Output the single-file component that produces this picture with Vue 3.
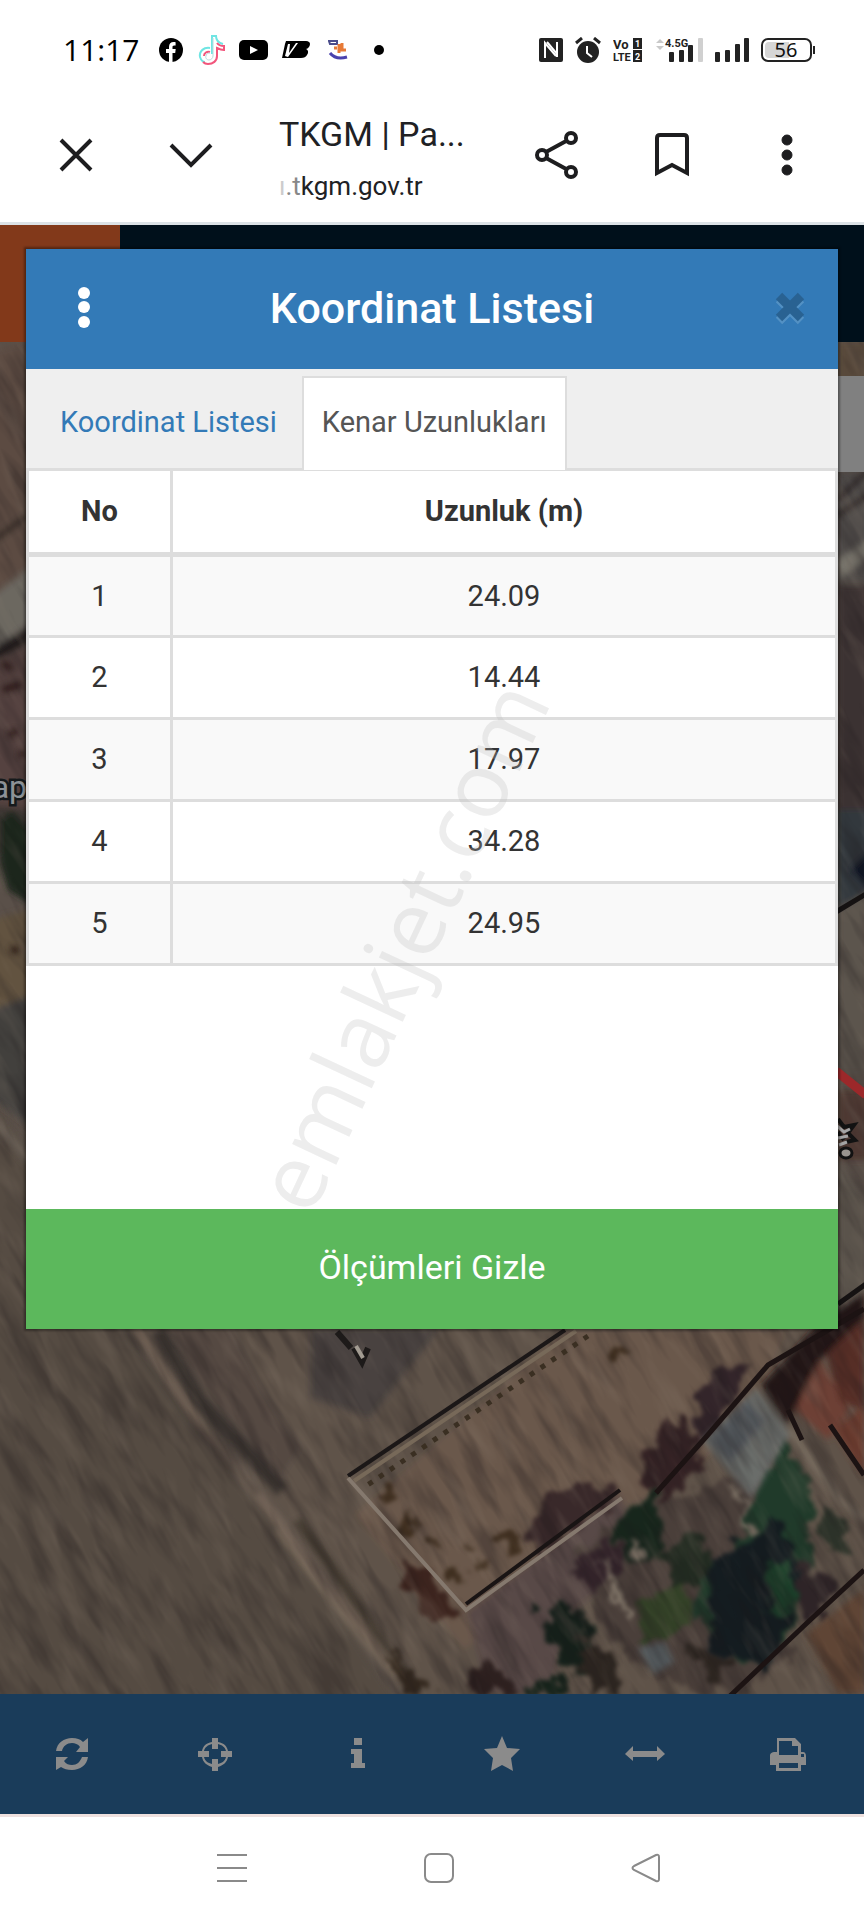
<template>
  <div class="screen">
    <header class="status-bar">
      <div class="status-left">
        <span class="clock">11:17</span>
        <svg width="24" height="24" viewBox="0 0 24 24">
          <circle cx="12" cy="12" r="12" fill="#000" />
          <path d="M10 24V15H7v-4h3V9c0-3.400 1.800-5 4.600-5 1 0 2 .2 2 .2v3.200h-1.400c-1.400 0-1.700.8-1.700 1.800V11h3.200l-.5 4h-2.700v9z" fill="#fff" />
        </svg>
        <svg width="28" height="30" viewBox="0 0 28 30" fill="none" stroke-width="2">
          <path d="M13 13c-6-1-11 3-10 9 1 3 3 5 5 5M15 19V1h4c0 5 3 7 7 8" stroke="#6fe5e3" />
          <path d="M20 8c2 3 4 3 7 3v4c-3 0-5-1-7-2v8c0 5-4 8-9 8-2 0-4-1-5-2M13 17c-3-1-6 1-6 4" stroke="#f2557c" />
          <path d="M16 3v18c0 2-2 4-4 4s-4-2-3-4c0-2 2-3 4-3" stroke="#b9d9dd" stroke-width="1" />
        </svg>
        <svg width="29" height="20" viewBox="0 0 29 20">
          <rect width="29" height="20" rx="5" fill="#000" />
          <path d="M11 6l8 4-8 4z" fill="#fff" />
        </svg>
        <svg width="28" height="18" viewBox="0 0 28 18">
          <path d="M4 0h20c4 0 5 3 3 6-1 1-2 2-3 2 2 1 3 3 1 6-1 2-3 3-6 3H0L3 3z" fill="#000" />
          <path d="M3 15L6 3h2L7 12 14 2h2L6 16" fill="#fff" />
        </svg>
        <svg class="face" width="20" height="20" viewBox="0 0 20 20" fill="none">
          <path d="M1 1h8v3H2z" stroke="#4b4d8c" stroke-width="2" />
          <path d="M11 4v9M6 8h3M14 3v6M10 10h8" stroke="#e77a37" stroke-width="3" />
          <path d="M2 13c4 5 10 6 17 4" stroke="#4a42ae" stroke-width="3" />
        </svg>
        <svg class="more-dot" width="10" height="10" viewBox="0 0 10 10"><circle cx="5" cy="5" r="5" /></svg>
      </div>
      <div class="status-right">
        <svg width="24" height="24" viewBox="0 0 24 24">
          <rect width="24" height="24" rx="2" fill="#222" />
          <path d="M6 20V5l11 13" fill="none" stroke="#fff" stroke-width="2" />
          <path d="M18 4v15M8 4l10 12" fill="none" stroke="#fff" stroke-width="2" />
        </svg>
        <svg width="26" height="26" viewBox="0 0 26 26">
          <circle cx="13" cy="15" r="11" fill="#222" />
          <path d="M1 6l6-5M19 1l6 5" stroke="#222" stroke-width="3" />
          <path d="M12 9v7l5 4" stroke="#fff" stroke-width="2" fill="none" />
        </svg>
        <svg width="30" height="26" viewBox="0 0 30 26">
          <text class="vo" x="0" y="12">Vo</text>
          <text class="lte" x="0" y="24">LTE</text>
          <rect x="20" y="1" width="9" height="11" fill="#222" />
          <rect x="20" y="13" width="9" height="12" fill="#222" />
          <text class="sim" x="22" y="10">1</text>
          <text class="sim" x="22" y="23">2</text>
        </svg>
        <svg width="48" height="26" viewBox="0 0 48 26">
          <path d="M1 6l4-4 4 4zM1 9h8l-4 4z" fill="#c9c9c9" />
          <text class="band" x="10" y="10">4.5G</text>
          <rect x="14" y="15" width="5" height="10" rx="1" fill="#222" />
          <rect x="24" y="13" width="5" height="12" rx="1" fill="#222" />
          <rect x="33" y="8" width="5" height="17" rx="1" fill="#222" />
          <rect x="43" y="1" width="5" height="24" rx="1" fill="#d0d0d0" />
        </svg>
        <svg width="34" height="24" viewBox="0 0 34 24" fill="#222">
          <rect y="14" width="5" height="10" rx="1" />
          <rect x="10" y="12" width="5" height="12" rx="1" />
          <rect x="20" y="6" width="5" height="18" rx="1" />
          <rect x="29" width="5" height="24" rx="1" />
        </svg>
        <svg width="54" height="26" viewBox="0 0 54 26">
          <rect x="1" y="2" width="49" height="22" rx="6" fill="#fff" stroke="#222" stroke-width="2" />
          <path d="M8 5h20v16H8a4 4 0 0 1-4-4V9a4 4 0 0 1 4-4z" fill="#d6d6d6" />
          <path d="M53 9v8" stroke="#222" stroke-width="2" />
          <text class="battery" x="25" y="20" text-anchor="middle">56</text>
        </svg>
      </div>
    </header>

    <div class="browser-bar">
      <button class="icon-btn" aria-label="Kapat">
        <svg width="34" height="34" viewBox="0 0 34 34"><path d="M2 2l30 30M32 2L2 32" /></svg>
      </button>
      <button class="icon-btn" aria-label="Küçült">
        <svg width="44" height="34" viewBox="0 0 44 34"><path d="M2 7l20 20L42 7" /></svg>
      </button>
      <div class="page-info">
        <div class="page-title">TKGM | Pa...</div>
        <div class="page-url"><span class="fade-1">ı</span><span class="fade-2">.t</span>kgm.gov.tr</div>
      </div>
      <button class="icon-btn" aria-label="Paylaş">
        <svg width="46" height="50" viewBox="0 0 46 50">
          <path d="M12 22L34 10M12 28l22 12" />
          <circle cx="8" cy="25" r="5" /><circle cx="37" cy="8" r="5" /><circle cx="37" cy="42" r="5" />
        </svg>
      </button>
      <button class="icon-btn" aria-label="Yer işareti">
        <svg width="36" height="46" viewBox="0 0 36 46"><path d="M3 41V6q0-3 3-3h24q3 0 3 3v35l-15-8z" /></svg>
      </button>
      <button class="icon-btn" aria-label="Diğer">
        <svg width="12" height="42" viewBox="0 0 12 42" class="dots"><circle cx="6" cy="6" r="5" /><circle cx="6" cy="21" r="5" /><circle cx="6" cy="36" r="5" /></svg>
      </button>
    </div>

    <main class="app">
      <div class="app-header"><div class="app-brand"></div></div>

      <div class="map">
        <svg class="map-image" viewBox="0 342 864 1352" preserveAspectRatio="xMidYMid slice">
          <defs>
            <filter id="soft" x="-10%" y="-10%" width="120%" height="120%"><feGaussianBlur stdDeviation="3" /></filter>
            <filter id="rough" x="-10%" y="-10%" width="120%" height="120%" color-interpolation-filters="sRGB">
              <feTurbulence type="fractalNoise" baseFrequency="0.05" numOctaves="3" seed="4" />
              <feDisplacementMap in="SourceGraphic" scale="34" xChannelSelector="R" yChannelSelector="G" />
              <feGaussianBlur stdDeviation="2" />
            </filter>
            <filter id="grain" x="0" y="0" width="100%" height="100%" color-interpolation-filters="sRGB">
              <feTurbulence type="fractalNoise" baseFrequency="0.012 0.06" numOctaves="3" seed="9" />
              <feColorMatrix values="0 0 0 0 0.1  0 0 0 0 0.08  0 0 0 0 0.09  3 0 0 0 -1.300" />
            </filter>
            <filter id="light" x="0" y="0" width="100%" height="100%" color-interpolation-filters="sRGB">
              <feTurbulence type="fractalNoise" baseFrequency="0.015 0.06" numOctaves="3" seed="21" />
              <feColorMatrix values="0 0 0 0 0.6  0 0 0 0 0.54  0 0 0 0 0.48  3 0 0 0 -1.500" />
            </filter>
          </defs>
          <rect y="342" width="864" height="1352" fill="#5a5049" />
          <g filter="url(#soft)">
            <path d="M120 1300L420 1700H900V1200H120z" fill="#5e534a" />
            <path d="M-20 1080l430 640H-20z" fill="#544b43" />
            <path d="M160 1328h70l30 60 40 60-20 30-60-70z" fill="#544a43" />
            <path d="M310 1328h130l-70 90-60-20z" fill="#484240" />
            <path d="M565 1330h220l-20 60-60 70-60 40-60 20-40 50-60 60-20 20-110-135z" fill="#6a594b" />
            <path d="M466 1612l154-118 20 60-70 60-20 80h-60z" fill="#594a46" />
            <path d="M132 1320l70 110 60 70 60 80 100 120" stroke="#6f6154" stroke-width="9" fill="none" />
            <path d="M158 1330l42 70 50 55 32 36" stroke="#37312f" stroke-width="15" fill="none" />
            <path d="M298 1520l50 70 70 104" stroke="#40382f" stroke-width="10" fill="none" />
            <path d="M276 1530l60 76 72 90" stroke="#7c6d5d" stroke-width="4" fill="none" />
            <path d="M126 1330l66 94 66 70" stroke="#3d3630" stroke-width="4" fill="none" />
          </g>
          <g filter="url(#rough)">
            <path d="M402 1565q12-8 20 5l32 40q-6 16-24 8-18-24-28-53z" fill="#3c241e" />
            <path d="M468 1670q30-12 56 24h-54z" fill="#2d201f" />
            <path d="M392 1655q20 4 40 40h-28z" fill="#34291f" />
            <path d="M525 1535q20-60 75-50l20 10-80 60z" fill="#39292a" />
            <path d="M638 1475q20-60 50-55 20 20 10 50l-34 34z" fill="#352325" />
            <path d="M692 1410q14-46 58-44l-46 86z" fill="#33252a" />
            <path d="M575 1550l50-30 40-20 90-30 30 60 10 120-60 50-80-20-60-60z" fill="#4a3f3a" />
            <path d="M618 1520l36-26 12 34-14 40-30-10z" fill="#17261c" />
            <path d="M572 1560l42-24 14 30-40 36z" fill="#33242a" />
            <path d="M542 1612q22-24 42 5l8 60-34-8z" fill="#15201a" />
            <path d="M750 1500l34-70 20 50 6 70-20 90-50 30-46-60 0-40 40-14z" fill="#203a2a" />
            <path d="M710 1560l70-40 24 60-34 90-56-20z" fill="#141c20" />
            <path d="M764 1570l26-8 8 40-24 20z" fill="#1c402a" />
            <path d="M638 1600l46-14 14 36-54 24z" fill="#334127" />
            <path d="M654 1550l46-14 12 40-40 18z" fill="#222b21" />
            <path d="M798 1560l36 20-18 46-20-24z" fill="#2e2427" />
            <path d="M534 1680l30-4 6 18h-36z" fill="#15221a" />
            <path d="M576 1640l30 10 20 44h-34zM690 1640l40 20-14 30z" fill="#2c2520" />
            <path d="M820 1500l20 10 10 40-24 4z" fill="#2c3229" />
            <path d="M600 1560l30 60M632 1540l10 20M736 1490l14 40" stroke="#7b7064" stroke-width="6" />
          </g>
          <g filter="url(#soft)">
            <path d="M756 1388l34 46-38 64-50-58z" fill="#6a6d6b" />
            <path d="M746 1400l20 20-36 42-20-22z" fill="#575c60" />
            <path d="M782 1398l38-38 30 50-22 30z" fill="#6d4034" />
            <path d="M826 1350l38-30v90l-24-8z" fill="#572e28" />
            <path d="M834 1430l30-25v72z" fill="#6b3b2d" />
            <path d="M762 1385l50-55 52-42v30l-44 42-34 66z" fill="#241416" />
            <path d="M806 1634l58-45v104h-26z" fill="#5f4536" />
            <path d="M638 1648l26-6 10 20-20 12z" fill="#565d60" />
            <path d="M790 1430l50 70 24 20" stroke="#786d60" stroke-width="6" fill="none" />
          </g>
          <g fill="#3f2f20" filter="url(#rough)">
            <ellipse cx="386" cy="1494" rx="8" ry="9" /><ellipse cx="410" cy="1525" rx="8" ry="9" />
            <ellipse cx="432" cy="1546" rx="6" ry="7" /><ellipse cx="455" cy="1577" rx="7" ry="8" />
            <ellipse cx="483" cy="1565" rx="8" ry="6" /><ellipse cx="508" cy="1540" rx="10" ry="11" />
            <ellipse cx="470" cy="1548" rx="4" ry="6" /><ellipse cx="622" cy="1349" rx="7" ry="7" />
          </g>

          <!-- strip left of the dialog -->
          <g filter="url(#soft)">
            <path d="M-10 350l40-10v240l-40 30z" fill="#5c4c43" />
            <path d="M-10 598l40-30v55l-40 32z" fill="#6c6761" />
            <path d="M-10 650l40-25v18l-40 20z" fill="#211a1a" />
            <path d="M-10 665l40-20v170l-40-10z" fill="#54433f" />
            <path d="M-10 805l40 5v60l-40-20z" fill="#3a3631" />
            <path d="M0 820l12-10 18 20v74l-22-14-8-28z" fill="#1c251f" />
            <path d="M-10 920l40-10v85l-40 15z" fill="#625341" />
            <path d="M-10 1010l40-14v130l-40-30z" fill="#42403e" />
            <path d="M2 662l10 8M2 690l20-6M8 735l10-4M22 750v8M10 950h10" stroke="#2b1919" stroke-width="8" />
            <path d="M-6 1120l60 70" stroke="#6c6259" stroke-width="8" />
            <path d="M-6 540l36-26" stroke="#2a211e" stroke-width="5" />
          </g>

          <!-- strip right of the dialog -->
          <g filter="url(#soft)">
            <path d="M838 342h30v60h-30z" fill="#584a3b" />
            <path d="M838 472h30v110h-30z" fill="#4f4b49" />
            <path d="M838 500l30-30M838 515l30-20" stroke="#292423" stroke-width="6" />
            <path d="M838 560l30-20v18l-30 22z" fill="#77736b" />
            <path d="M838 585h30v230h-30z" fill="#3b3230" />
            <path d="M838 810h30v80l-30 20z" fill="#30383e" />
            <path d="M850 870l20-20v40z" fill="#0f1726" />
            <path d="M838 908l30-14v180h-30z" fill="#5c544d" />
            <path d="M838 1090h30v70h-30z" fill="#4d3833" />
            <path d="M838 1160l30 40v90l-30 20z" fill="#5a524b" />
          </g>
          <rect x="-500" y="-300" width="2000" height="2600" filter="url(#grain)" opacity=".28" transform="rotate(60 432 1000)" />
          <rect x="-500" y="-300" width="2000" height="2600" filter="url(#light)" opacity=".16" transform="rotate(60 432 1000)" />

          <!-- parcel walls -->
          <path d="M565 1330L348 1476" stroke="#1b1717" stroke-width="4" />
          <path d="M576 1331L354 1481" stroke="#776959" stroke-width="4" />
          <path d="M588 1336L366 1486" stroke="#3a2f22" stroke-width="5" stroke-dasharray="5 8" />
          <path d="M348 1478l118 132 156-112" fill="none" stroke="#85796e" stroke-width="4" />
          <path d="M466 1604l154-114" stroke="#191414" stroke-width="4" />
          <path d="M656 1493l50-56 62-72 96-56M730 1696l78-74 56-52M788 1410l14 30M830 1425l34 50" fill="none" stroke="#1c1313" stroke-width="5" />
          <path d="M337 1332l14 16M354 1348l8 14 6-14" stroke="#1d1a19" stroke-width="6" fill="none" />
          <path d="M356 1346l7 12" stroke="#a39c92" stroke-width="4" />

          <text class="place" x="27" y="798" text-anchor="end">ap</text>
          <path d="M836 912l30-18M838 1304l28-20" stroke="#151212" stroke-width="5" />
          <path d="M836 1071l30 24" stroke="#9c282a" stroke-width="9" />
          <path d="M838 1119l6 8 10-2-6 8 7 7-9 2M838 1132l6 8" fill="none" stroke="#121212" stroke-width="4" />
          <path d="M837 1126l7 6 6-3M838 1138l10-2M839 1145l8-3" stroke="#a4a4a4" stroke-width="3" fill="none" />
          <ellipse cx="846" cy="1153" rx="6" ry="5" fill="#99948f" stroke="#121212" stroke-width="3" />
          <rect x="830" y="376" width="40" height="96" fill="#808080" />
        </svg>
      </div>

      <nav class="toolbar">
        <button v-for="tool in tools" :key="tool.name" class="tool" :aria-label="tool.name">
          <svg width="40" height="36" viewBox="0 0 40 36">
            <path :d="tool.path" fill-rule="evenodd" />
          </svg>
        </button>
      </nav>

      <div class="modal-overlay">
        <section class="modal">
          <div class="modal-header">
            <button class="modal-menu" aria-label="Menü">
              <svg width="12" height="42" viewBox="0 0 12 42"><circle cx="6" cy="6" r="6" /><circle cx="6" cy="20" r="6" /><circle cx="6" cy="35" r="6" /></svg>
            </button>
            <h1>Koordinat Listesi</h1>
            <button class="modal-close" aria-label="Kapat">
              <svg width="32" height="34" viewBox="0 0 32 34" fill="none" stroke-width="9">
                <path d="M5 8l22 22M27 8L5 30" stroke="#5391c4" />
                <path d="M5 5l22 22M27 5L5 27" stroke="#296292" />
              </svg>
            </button>
          </div>
          <div class="tabs">
            <button v-for="tab in tabs" :key="tab" class="tab" :class="{ active: tab === activeTab }" @click="activeTab = tab">{{ tab }}</button>
          </div>
          <div class="modal-body">
            <table>
              <thead>
                <tr><th class="no">No</th><th>Uzunluk (m)</th></tr>
              </thead>
              <tbody>
                <tr v-for="(edge, index) in edges" :key="index">
                  <td>{{ index + 1 }}</td>
                  <td>{{ edge }}</td>
                </tr>
              </tbody>
            </table>
            <span class="watermark">emlakjet.com</span>
          </div>
          <button class="btn-hide">Ölçümleri Gizle</button>
        </section>
      </div>
    </main>

    <nav class="phone-nav">
      <button class="icon-btn" aria-label="Son uygulamalar">
        <svg width="30" height="30" viewBox="0 0 30 30"><path d="M0 2h30M0 15h30M0 28h30" /></svg>
      </button>
      <button class="icon-btn" aria-label="Ana ekran">
        <svg width="30" height="30" viewBox="0 0 30 30"><rect x="1" y="1" width="28" height="28" rx="6" /></svg>
      </button>
      <button class="icon-btn" aria-label="Geri">
        <svg width="30" height="30" viewBox="0 0 30 30"><path d="M3 13L25 2q3-1 3 2v22q0 3-3 2L3 17q-3-2 0-4z" /></svg>
      </button>
    </nav>
  </div>
</template>

<script setup>
import { ref } from 'vue';

const tabs = ['Koordinat Listesi', 'Kenar Uzunlukları'];
const activeTab = ref('Kenar Uzunlukları');

const edges = ['24.09', '14.44', '17.97', '34.28', '24.95'];

const tools = [
  { name: 'Yenile', path: 'M4 15C5 7 12 2 20 2c5 0 8 1 11 4l5-4v14H24l4-5c-2-3-5-4-8-4-5 0-9 3-10 8zM36 21c-1 8-8 13-16 13-5 0-8-1-11-3l-5 3V21h12l-4 4c2 3 5 4 8 4 5 0 8-3 10-8z' },
  { name: 'Konum', path: 'M17 2h6v4c6 1 9 4 10 9h4v6h-4c-1 5-4 8-10 10v4h-6v-4C11 29 8 26 7 21H3v-6h4c1-5 4-8 10-9zM17 8c-4 1-7 3-8 7h5v6H9c1 4 4 6 8 7v-5h6v5c4-1 7-3 8-7h-5v-6h5c-1-4-4-6-8-7v5h-6z' },
  { name: 'Bilgi', path: 'M16 2h8v7h-8zM13 13h11v14h3v5H13v-5h3v-9h-3z' },
  { name: 'Favoriler', path: 'M20 0l5 12 13 1-9 9 2 13-11-6-11 6 2-13-9-9 13-1z' },
  { name: 'Ölç', path: 'M0 18l8-8v5h24v-5l8 8-8 7v-4H8v4z' },
  { name: 'Yazdır', path: 'M9 2h18l6 6v8h2c2 0 3 2 3 4v9h-5v6H8v-6H2v-9c0-3 2-4 5-4h2zM11 5v14h19v-9h-6V5zM11 27v5h19v-5zM33 18v3h3v-3z' }
];
</script>

<style>
body { margin: 0; }
</style>

<style scoped>
.screen { display: flex; flex-direction: column; min-height: 100vh; background: #fff; font-family: Roboto, "Noto Sans", sans-serif; overflow: hidden; }
button { border: none; background: none; padding: 0; font-family: inherit; cursor: pointer; }
svg { display: block; flex-shrink: 0; }

.status-bar { display: flex; justify-content: space-between; height: 100px; padding: 0 49px 0 63px; box-sizing: border-box; }
.status-left, .status-right { display: flex; align-items: center; }
.status-left { gap: 14px; }
.status-right { gap: 12px; }
.clock { font-family: "Open Sans", sans-serif; font-size: 30px; line-height: 40px; color: #000; margin-right: 5px; }
.face { margin-left: 4px; }
.more-dot { margin-left: 12px; }
.vo { font: bold 13px Roboto, sans-serif; fill: #222; }
.lte { font: bold 11px Roboto, sans-serif; fill: #222; }
.sim { font: bold 9px Roboto, sans-serif; fill: #fff; }
.band { font: bold 11px Roboto, sans-serif; fill: #222; }
.battery { font: 20px "Noto Sans", sans-serif; fill: #111; }

.browser-bar { display: flex; align-items: center; gap: 69px; height: 125px; padding: 0 54px 12px 53px; box-sizing: border-box; border-bottom: 3px solid #dce2e6; }
.icon-btn { display: flex; align-items: center; justify-content: center; }
.icon-btn svg { fill: none; stroke: #1d1d1f; stroke-width: 4; }
.browser-bar .icon-btn { flex: 0 0 46px; }
.browser-bar .dots { fill: #1d1d1f; stroke: #1d1d1f; stroke-width: 1; }
.page-info { flex: 1; min-width: 0; padding-top: 10px; margin: 0 -20px 0 -4px; color: #202124; white-space: nowrap; }
.page-title { font-size: 34px; line-height: 52px; }
.page-url { font-size: 26px; line-height: 52px; }
.fade-1 { color: #ccc; }
.fade-2 { color: #888; }

.app { position: relative; flex: 1; display: flex; flex-direction: column; }
.app-header { height: 117px; background: #00101b; }
.app-brand { width: 120px; height: 100%; background: #82391a; }
.map { position: relative; flex: 1; background: #595048; overflow: hidden; }
.map-image { position: absolute; inset: 0; width: 100%; height: 100%; }
.place { font: 32px Roboto, sans-serif; fill: #8d9296; stroke: #15191b; stroke-width: 5; paint-order: stroke; }

.toolbar { display: grid; grid-template-columns: repeat(6, 1fr); height: 120px; padding-right: 4px; background: #1a3c5a; border-bottom: 3px solid #eee0de; }
.tool { display: flex; align-items: center; justify-content: center; }
.tool svg { fill: #8b8b8b; }

.modal-overlay { position: absolute; inset: 0; padding: 24px 26px; }
.modal { background: #fff; box-shadow: 0 0 2px 2px rgba(0, 0, 0, 0.35); }
.modal-header { display: flex; align-items: center; justify-content: space-between; height: 120px; padding: 0 32px 2px 52px; box-sizing: border-box; background: #337ab7; }
.modal-header h1 { margin: 0; color: #fff; font-size: 43px; line-height: 50px; font-weight: 500; }
.modal-menu svg { fill: #fff; }
.tabs { display: flex; gap: 5px; padding: 7px 14px 0; background: #efefef; border-bottom: 3px solid #ddd; }
.tab { height: 94px; margin-bottom: -2px; padding: 0 18px 4px; border: 2px solid transparent; border-bottom: none; font-size: 29px; line-height: 40px; color: #337ab7; }
.tab.active { background: #fff; border-color: #ddd; color: #555; }

.modal-body { position: relative; min-height: 738px; }
table { width: 100%; border-collapse: collapse; table-layout: fixed; color: #333; font-size: 29px; line-height: 40px; text-align: center; }
th, td { border: 3px solid #ddd; height: 82px; padding: 0; box-sizing: border-box; }
th { height: 83px; border-top: none; border-bottom-width: 5px; font-weight: bold; }
.no { width: 144px; }
tbody tr:nth-child(odd) { background: #f9f9f9; }
.watermark { position: absolute; left: 374px; top: 474px; transform: translate(-50%, -50%) rotate(-65deg); font-family: "Open Sans", sans-serif; font-size: 91px; line-height: 90px; color: #bbb; opacity: 0.26; white-space: nowrap; pointer-events: none; }
.btn-hide { display: block; width: 100%; height: 120px; padding-bottom: 4px; background: #5cb85c; color: #fff; font-size: 34px; line-height: 44px; }

.phone-nav { display: grid; grid-template-columns: repeat(3, 1fr); height: 103px; padding: 0 115px 2px 129px; box-sizing: border-box; }
.phone-nav svg { stroke: #8a8a8a; stroke-width: 2; }
</style>
